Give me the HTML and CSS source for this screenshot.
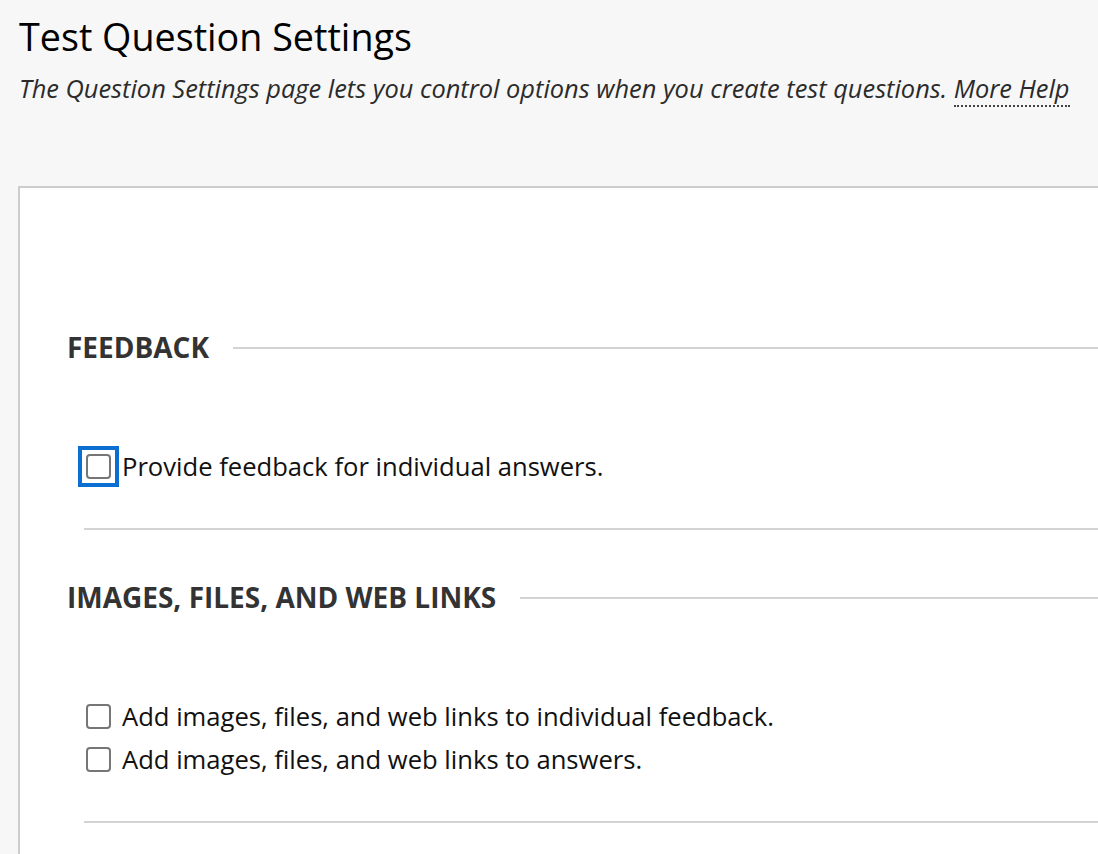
FILE: index.html
```html
<!DOCTYPE html>
<html>
<head>
<meta charset="utf-8">
<link rel="stylesheet" href="styles.css">
</head>
<body>
<header class="page-header">
  <h1 class="page-title">Test Question Settings</h1>
  <p class="page-desc">The Question Settings page lets you control options when you create test questions. <a class="help-link" href="#">More Help</a></p>
</header>
<main class="panel">
  <section class="step">
    <h2 class="step-title"><span>FEEDBACK</span></h2>
    <div class="step-body">
      <label class="check-row"><span class="focus-ring"><input type="checkbox" class="check"></span><span>Provide feedback for individual answers.</span></label>
    </div>
  </section>
  <section class="step">
    <h2 class="step-title"><span>IMAGES, FILES, AND WEB LINKS</span></h2>
    <div class="step-body">
      <label class="check-row"><input type="checkbox" class="check"><span>Add images, files, and web links to individual feedback.</span></label>
      <label class="check-row"><input type="checkbox" class="check"><span>Add images, files, and web links to answers.</span></label>
    </div>
  </section>
</main>
</body>
</html>
```
FILE: styles.css
```css
html, body {
  margin: 0;
  padding: 0;
  background: #f7f7f7;
  font-family: "Open Sans", "Noto Sans", sans-serif;
  color: #111;
  overflow: hidden;
}
.page-header {
  padding: 13px 0 0 19px;
}
.page-title {
  margin: 0;
  font-size: 37.7px;
  font-weight: 400;
  line-height: 48px;
  color: #000;
}
.page-desc {
  margin: 9px 0 0 0;
  font-size: 25.4px;
  font-style: italic;
  line-height: 36px;
  color: #2b2b2b;
}
.help-link {
  color: #2b2b2b;
  text-decoration: none;
  border-bottom: 2px dotted #444;
}
.panel {
  margin: 80px -40px 0 18px;
  background: #fff;
  border: 2px solid #cdcdcd;
  padding: 141px 0 0 47px;
  min-height: 800px;
}
.step-title {
  display: flex;
  align-items: center;
  gap: 24px;
  margin: 0;
  font-size: 28px;
  font-weight: 700;
  line-height: 36px;
  color: #333;
}
.step-title::after {
  content: "";
  flex: 1;
  height: 2px;
  margin-top: 2px;
  background: #d3d3d3;
}
.step-body {
  margin-left: 17px;
  padding: 80px 0 40px 0;
  border-bottom: 2px solid #d3d3d3;
  margin-bottom: 49px;
  display: flex;
  flex-direction: column;
}
.check-row {
  display: flex;
  align-items: center;
  height: 43px;
  font-size: 25.6px;
  color: #111;
}
.check {
  appearance: none;
  -webkit-appearance: none;
  flex: none;
  width: 25px;
  height: 25px;
  margin: 0 11px 0 2px;
  border: 2px solid #767676;
  border-radius: 4px;
  background: #fff;
}
.focus-ring {
  display: flex;
  flex: none;
  border: 4px solid #0a6fd1;
  padding: 4px;
  margin: 0 3px 0 -6px;
}
.focus-ring .check {
  margin: 0;
}
```
